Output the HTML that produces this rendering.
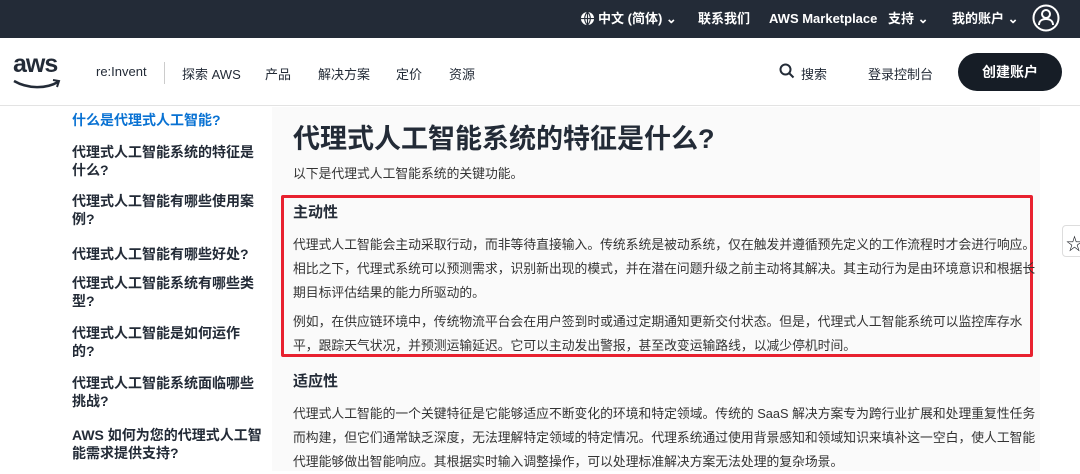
<!DOCTYPE html>
<html><head><meta charset="utf-8"><style>
*{margin:0;padding:0;box-sizing:border-box}
body{width:1080px;height:471px;overflow:hidden;background:#fff;font-family:"Liberation Sans","Noto Sans CJK SC",sans-serif;position:relative;color:#16191f}
.a{position:absolute;white-space:nowrap}
#top{position:absolute;left:0;top:0;width:1080px;height:38px;background:#232b37;color:#fff;font-size:13px;font-weight:bold}
#top .a{top:10px;line-height:17px}
#nav{position:absolute;left:0;top:38px;width:1080px;height:68px;border-bottom:1px solid #e3e3e3;font-size:13px;color:#232b37}
#side{font-size:14px;font-weight:bold;line-height:18px;color:#232b37}
#panel{position:absolute;left:272px;top:107px;width:768px;height:364px;background:#fafafa}
.p{font-size:12.8px;color:#333;line-height:24px}
</style></head><body>
<div id="top">
<svg class="a" style="left:580px;top:11px" width="15" height="15" viewBox="0 0 16 16"><circle cx="8" cy="8" r="7" fill="#fff"/><path d="M1 8h14M8 1v14M8 1c-4 4-4 10 0 14M8 1c4 4 4 10 0 14" stroke="#232b37" stroke-width="1.2" fill="none"/></svg>
<div class="a" style="left:598px">中文 (简体) ⌄</div>
<div class="a" style="left:698px">联系我们</div>
<div class="a" style="left:769px">AWS Marketplace</div>
<div class="a" style="left:888px">支持 ⌄</div>
<div class="a" style="left:952px">我的账户 ⌄</div>
<svg class="a" style="left:1032px;top:4px" width="28" height="28" viewBox="0 0 28 28"><circle cx="14" cy="14" r="12.5" stroke="#fff" stroke-width="2" fill="none"/><circle cx="14" cy="10" r="4" stroke="#fff" stroke-width="2" fill="none"/><path d="M7 21c0-4 3-6 7-6s7 2 7 6" stroke="#fff" stroke-width="2" fill="none"/></svg>
</div>
<div id="nav">
<div class="a" style="left:13px;top:12px;font-size:25px;font-weight:bold;color:#232b37;letter-spacing:-1px">aws</div>
<svg class="a" style="left:12px;top:40px" width="50" height="12" viewBox="0 0 50 12"><path d="M2 3c14 8 32 8 44 1" stroke="#232b37" stroke-width="2.5" fill="none"/><path d="M41 2l6 1-2 6" stroke="#232b37" stroke-width="2" fill="none"/></svg>
<div class="a" style="left:96px;top:26px">re:Invent</div>
<div class="a" style="left:164px;top:24px;width:1px;height:22px;background:#ccc"></div>
<div class="a" style="left:182px;top:26px">探索 AWS</div>
<div class="a" style="left:265px;top:26px">产品</div>
<div class="a" style="left:318px;top:26px">解决方案</div>
<div class="a" style="left:396px;top:26px">定价</div>
<div class="a" style="left:449px;top:26px">资源</div>
<svg class="a" style="left:779px;top:25px" width="16" height="16" viewBox="0 0 16 16"><circle cx="6.5" cy="6.5" r="5" stroke="#232b37" stroke-width="2" fill="none"/><path d="M10 10l4.5 4.5" stroke="#232b37" stroke-width="2"/></svg>
<div class="a" style="left:801px;top:26px">搜索</div>
<div class="a" style="left:868px;top:26px">登录控制台</div>
<div class="a" style="left:958px;top:15px;width:104px;height:38px;border-radius:19px;background:#161d26;color:#fff;font-weight:bold;font-size:14px;text-align:center;line-height:38px">创建账户</div>
</div>
<div id="side">
<div class="a" style="left:72px;top:111px;color:#0972d3">什么是代理式人工智能?</div>
<div class="a" style="left:72px;top:143px">代理式人工智能系统的特征是<br>什么?</div>
<div class="a" style="left:72px;top:192px">代理式人工智能有哪些使用案<br>例?</div>
<div class="a" style="left:72px;top:245px">代理式人工智能有哪些好处?</div>
<div class="a" style="left:72px;top:274px">代理式人工智能系统有哪些类<br>型?</div>
<div class="a" style="left:72px;top:324px">代理式人工智能是如何运作<br>的?</div>
<div class="a" style="left:72px;top:374px">代理式人工智能系统面临哪些<br>挑战?</div>
<div class="a" style="left:72px;top:426px">AWS 如何为您的代理式人工智<br>能需求提供支持?</div>
</div>
<div id="panel"></div>
<div class="a" style="left:293px;top:117px;font-size:27px;font-weight:bold;color:#232b37">代理式人工智能系统的特征是什么?</div>
<div class="a p" style="left:293px;top:162px">以下是代理式人工智能系统的关键功能。</div>
<div class="a" style="left:281px;top:195px;width:752px;height:162px;border:3px solid #e8212f;border-radius:2px"></div>
<div class="a" style="left:293px;top:201px;font-size:15px;font-weight:bold;color:#232b37">主动性</div>
<div class="a p" style="left:293px;top:233px">代理式人工智能会主动采取行动，而非等待直接输入。传统系统是被动系统，仅在触发并遵循预先定义的工作流程时才会进行响应。<br>相比之下，代理式系统可以预测需求，识别新出现的模式，并在潜在问题升级之前主动将其解决。其主动行为是由环境意识和根据长<br>期目标评估结果的能力所驱动的。</div>
<div class="a p" style="left:293px;top:310px">例如，在供应链环境中，传统物流平台会在用户签到时或通过定期通知更新交付状态。但是，代理式人工智能系统可以监控库存水<br>平，跟踪天气状况，并预测运输延迟。它可以主动发出警报，甚至改变运输路线，以减少停机时间。</div>
<div class="a" style="left:293px;top:370px;font-size:15px;font-weight:bold;color:#232b37">适应性</div>
<div class="a p" style="left:293px;top:402px">代理式人工智能的一个关键特征是它能够适应不断变化的环境和特定领域。传统的 SaaS 解决方案专为跨行业扩展和处理重复性任务<br>而构建，但它们通常缺乏深度，无法理解特定领域的特定情况。代理系统通过使用背景感知和领域知识来填补这一空白，使人工智能<br>代理能够做出智能响应。其根据实时输入调整操作，可以处理标准解决方案无法处理的复杂场景。</div>
<div class="a" style="left:1062px;top:225px;width:24px;height:32px;border:1px solid #ddd;border-radius:4px;background:#fff"></div>
<div class="a" style="left:1066px;top:230px;font-size:17px">☆</div>
</body></html>
